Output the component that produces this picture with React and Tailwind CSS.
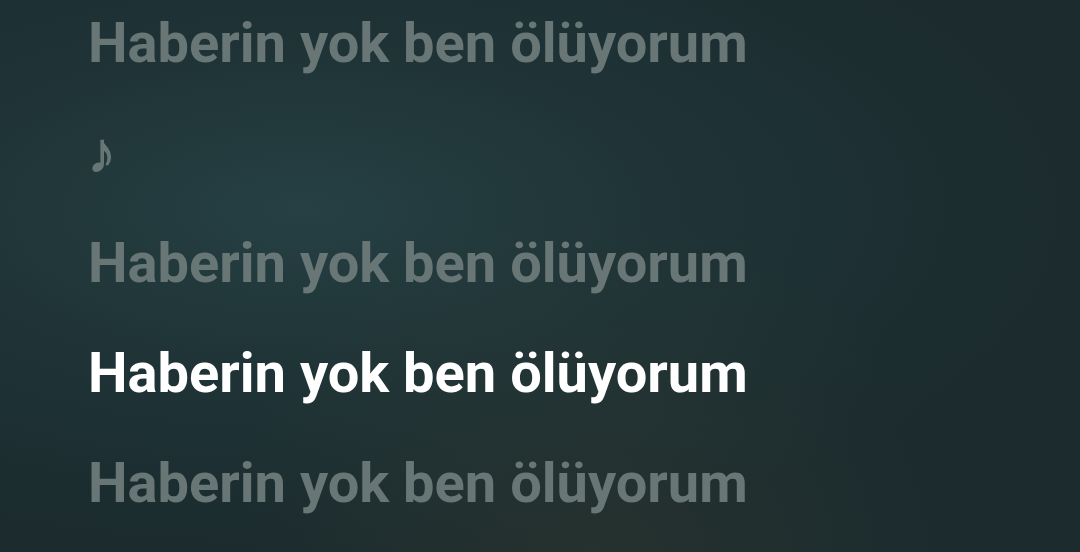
import React from "react";

const lines = [
  { text: "Haberin yok ben ölüyorum", active: false },
  { text: "♪", active: false, note: true },
  { text: "Haberin yok ben ölüyorum", active: false },
  { text: "Haberin yok ben ölüyorum", active: true },
  { text: "Haberin yok ben ölüyorum", active: false },
];

export default function App() {
  return (
    <div className="relative h-[552px] w-[1080px] overflow-hidden bg-[#1b2b2e] bg-[radial-gradient(ellipse_at_28%_38%,#264043_0%,#1f3336_35%,#1b2b2e_70%),linear-gradient(180deg,#1d2f32,#1a2a2c)]">
      <div className="pointer-events-none absolute inset-0 bg-[radial-gradient(ellipse_at_55%_105%,rgba(70,70,50,0.25)_0%,rgba(0,0,0,0)_45%)]" />
      <div className="relative -mt-[12px] flex flex-col pl-[88px] font-['Roboto',sans-serif]">
        {lines.map((line, i) => (
          <div
            key={i}
            className={
              "h-[110px] text-[56px] leading-[110px] font-bold " +
              (line.active ? "text-white" : "text-[#687676]") +
              (line.note ? " [-webkit-text-stroke:1.5px_#687676]" : "")
            }
          >
            {line.text}
          </div>
        ))}
      </div>
    </div>
  );
}
